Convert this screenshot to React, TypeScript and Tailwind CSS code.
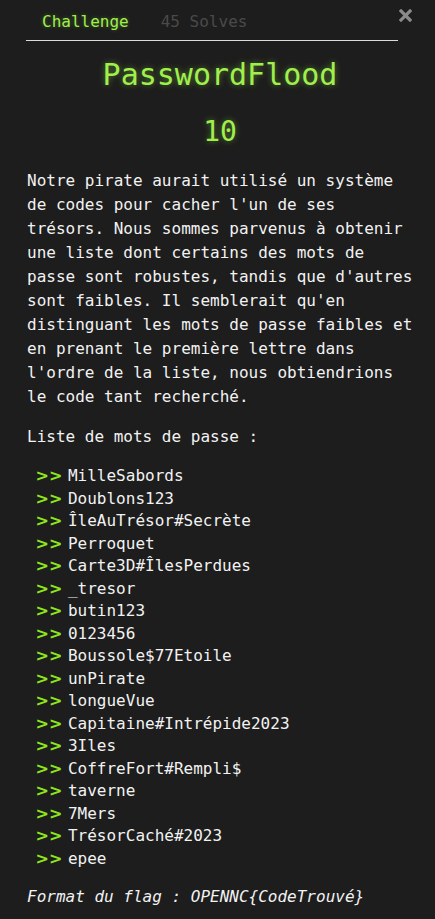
import React from "react";

const items = [
  "MilleSabords",
  "Doublons123",
  "ÎleAuTrésor#Secrète",
  "Perroquet",
  "Carte3D#ÎlesPerdues",
  "_tresor",
  "butin123",
  "0123456",
  "Boussole$77Etoile",
  "unPirate",
  "longueVue",
  "Capitaine#Intrépide2023",
  "3Iles",
  "CoffreFort#Rempli$",
  "taverne",
  "7Mers",
  "TrésorCaché#2023",
  "epee",
];

export default function App() {
  return (
    <div className="min-h-[919px] w-[435px] bg-[#1d1d1d] text-[#f2f2f2] font-['DejaVu_Sans_Mono',monospace] text-[16px] relative">
      <button className="absolute left-[399px] top-[9px] w-[13px] h-[13px] flex items-center justify-center">
        <svg width="13" height="13" viewBox="0 0 13 13">
          <path d="M2 2 L11 11 M11 2 L2 11" stroke="#8a8a8a" strokeWidth="3.2" strokeLinecap="square" />
        </svg>
      </button>
      <div className="ml-[26px] w-[372px] h-[41px] flex border-b border-[#dcdcdc]">
        <div className="px-4 pt-[10px] leading-[24px] text-[#9ef04a] [text-shadow:0_0_4px_rgba(158,240,74,0.35)]">Challenge</div>
        <div className="px-4 pt-[10px] leading-[24px] text-[#4a4a4a]">45 Solves</div>
      </div>
      <div className="ml-[27px] w-[386px]">
        <div className="mt-[16px] text-center text-[30px] leading-[36px] text-[#a0f04c] [text-shadow:0_0_6px_rgba(160,240,76,0.45)]">
          PasswordFlood
        </div>
        <div className="mt-[22px] text-center text-[28px] leading-[34px] text-[#a0f04c] [text-shadow:0_0_6px_rgba(160,240,76,0.45)]">
          10
        </div>
        <p className="mt-[20px] leading-[24px]">
          Notre pirate aurait utilisé un système de codes pour cacher l'un de ses trésors. Nous sommes parvenus à obtenir une liste dont certains des mots de passe sont robustes, tandis que d'autres sont faibles. Il semblerait qu'en distinguant les mots de passe faibles et en prenant le première lettre dans l'ordre de la liste, nous obtiendrions le code tant recherché.
        </p>
        <p className="mt-[16px] leading-[24px]">Liste de mots de passe :</p>
        <div className="mt-[16px] pl-[3px] flex flex-col">
          {items.map((it) => (
            <div key={it} className="leading-[22.5px] whitespace-pre">
              <span className="font-['DejaVu_Sans',sans-serif] font-bold text-[#8fe61c]"> &gt;&gt; </span>
              {it}
            </div>
          ))}
        </div>
        <p className="mt-[15px] leading-[24px] italic">Format du flag : OPENNC{"{"}CodeTrouvé{"}"}</p>
      </div>
    </div>
  );
}
